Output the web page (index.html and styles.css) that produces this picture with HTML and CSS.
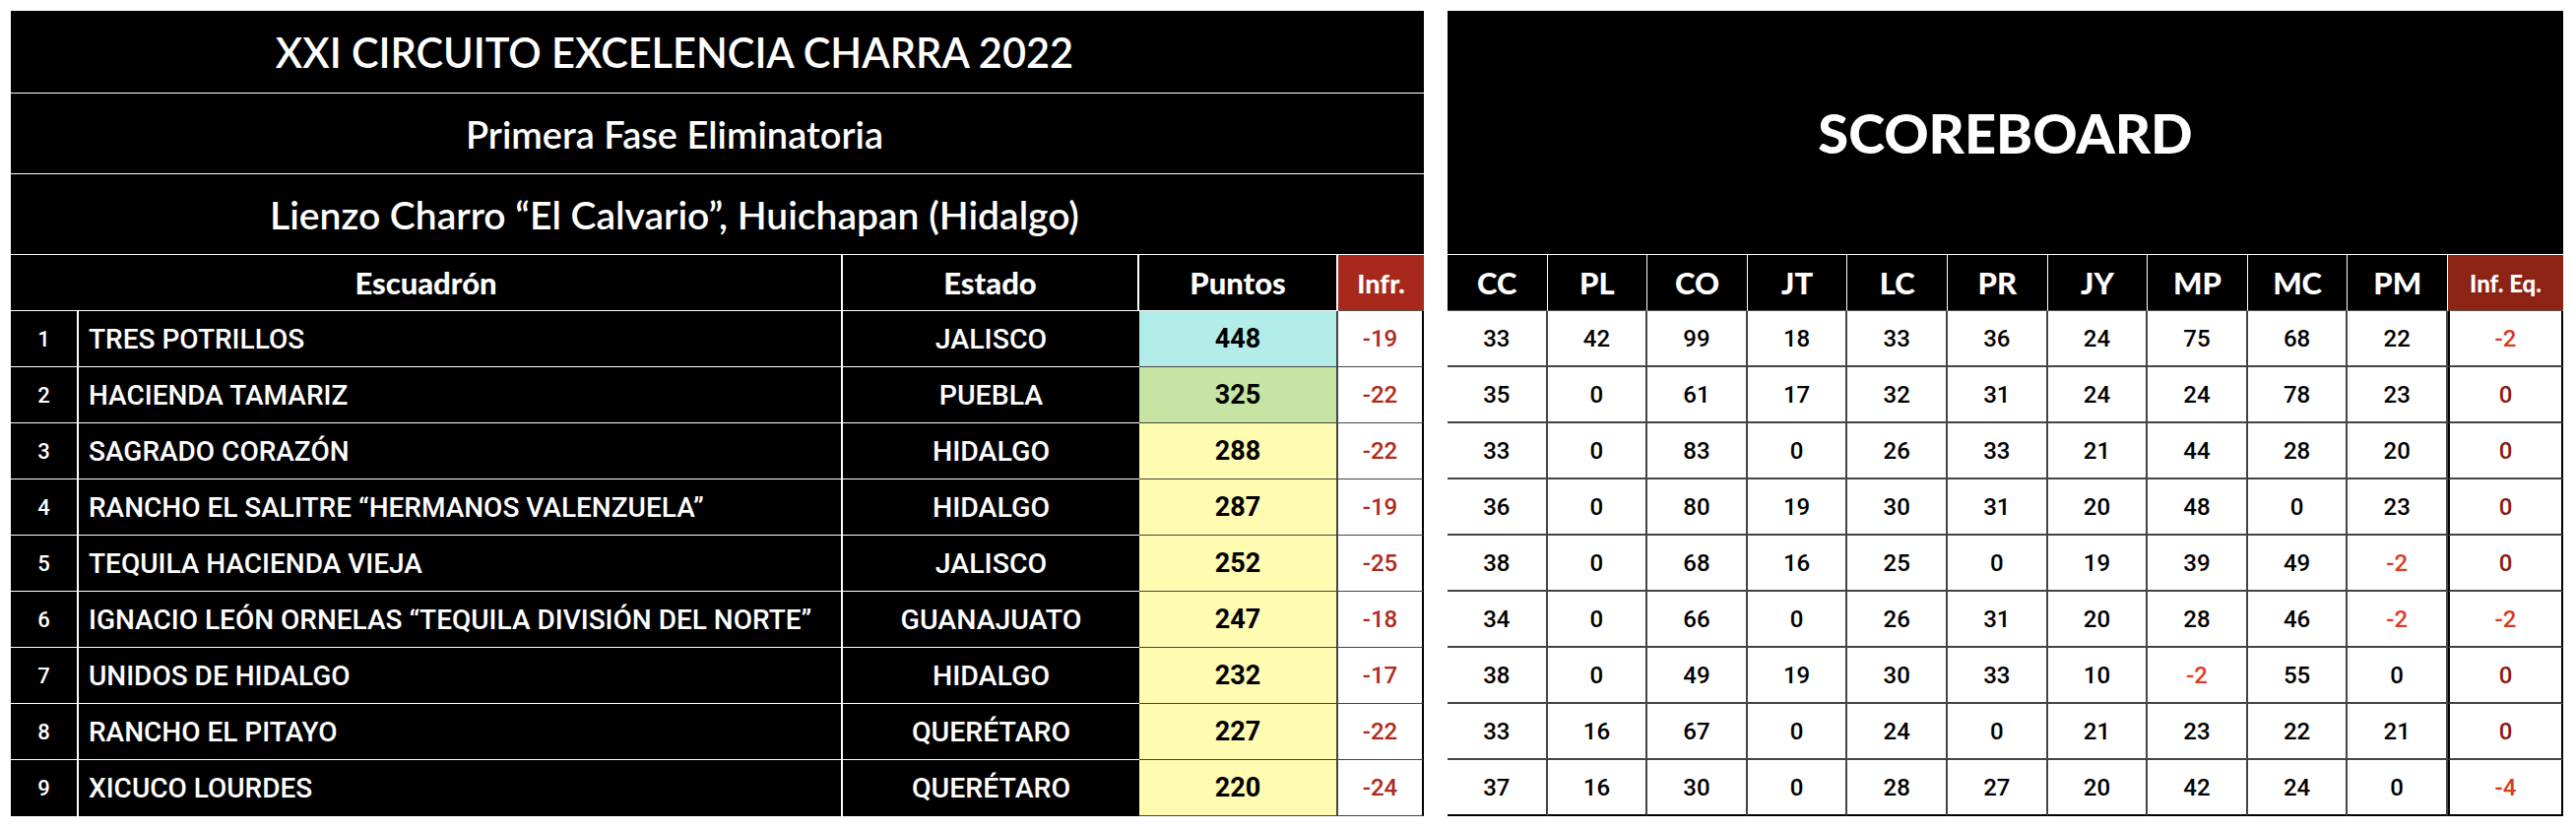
FILE: index.html
```html
<!DOCTYPE html>
<html lang="es">
<head>
<meta charset="utf-8">
<title>XXI Circuito Excelencia Charra 2022</title>
<link rel="stylesheet" href="styles.css">
</head>
<body>
<div class="page">
  <div class="left">
    <div class="t t1">XXI CIRCUITO EXCELENCIA CHARRA 2022</div>
    <div class="tx"></div>
    <div class="t t2">Primera Fase Eliminatoria</div>
    <div class="tx"></div>
    <div class="t t3">Lienzo Charro “El Calvario”, Huichapan (Hidalgo)</div>
    <div class="tx"></div>

    <div class="h hesc">Escuadrón</div>
    <div class="h">Estado</div>
    <div class="h">Puntos</div>
    <div class="h hinf">Infr.</div>

    <div class="rk">1</div><div class="nm">TRES POTRILLOS</div><div class="st">JALISCO</div><div class="pt p1">448</div><div class="if">-19</div>
    <div class="rk">2</div><div class="nm">HACIENDA TAMARIZ</div><div class="st">PUEBLA</div><div class="pt p2">325</div><div class="if">-22</div>
    <div class="rk">3</div><div class="nm">SAGRADO CORAZÓN</div><div class="st">HIDALGO</div><div class="pt">288</div><div class="if">-22</div>
    <div class="rk">4</div><div class="nm">RANCHO EL SALITRE “HERMANOS VALENZUELA”</div><div class="st">HIDALGO</div><div class="pt">287</div><div class="if">-19</div>
    <div class="rk">5</div><div class="nm">TEQUILA HACIENDA VIEJA</div><div class="st">JALISCO</div><div class="pt">252</div><div class="if">-25</div>
    <div class="rk">6</div><div class="nm">IGNACIO LEÓN ORNELAS “TEQUILA DIVISIÓN DEL NORTE”</div><div class="st">GUANAJUATO</div><div class="pt">247</div><div class="if">-18</div>
    <div class="rk">7</div><div class="nm">UNIDOS DE HIDALGO</div><div class="st">HIDALGO</div><div class="pt">232</div><div class="if">-17</div>
    <div class="rk">8</div><div class="nm">RANCHO EL PITAYO</div><div class="st">QUERÉTARO</div><div class="pt">227</div><div class="if">-22</div>
    <div class="rk last">9</div><div class="nm last">XICUCO LOURDES</div><div class="st last">QUERÉTARO</div><div class="pt">220</div><div class="if">-24</div>
  </div>

  <div class="right">
    <div class="sb">SCOREBOARD</div>
    <div class="rh">CC</div><div class="rh">PL</div><div class="rh">CO</div><div class="rh">JT</div><div class="rh">LC</div><div class="rh">PR</div><div class="rh">JY</div><div class="rh">MP</div><div class="rh">MC</div><div class="rh">PM</div><div class="rh rie">Inf. Eq.</div>

    <div class="rc">33</div><div class="rc">42</div><div class="rc">99</div><div class="rc">18</div><div class="rc">33</div><div class="rc">36</div><div class="rc">24</div><div class="rc">75</div><div class="rc">68</div><div class="rc">22</div><div class="rc ie neg">-2</div>
    <div class="rc">35</div><div class="rc">0</div><div class="rc">61</div><div class="rc">17</div><div class="rc">32</div><div class="rc">31</div><div class="rc">24</div><div class="rc">24</div><div class="rc">78</div><div class="rc">23</div><div class="rc ie">0</div>
    <div class="rc">33</div><div class="rc">0</div><div class="rc">83</div><div class="rc">0</div><div class="rc">26</div><div class="rc">33</div><div class="rc">21</div><div class="rc">44</div><div class="rc">28</div><div class="rc">20</div><div class="rc ie">0</div>
    <div class="rc">36</div><div class="rc">0</div><div class="rc">80</div><div class="rc">19</div><div class="rc">30</div><div class="rc">31</div><div class="rc">20</div><div class="rc">48</div><div class="rc">0</div><div class="rc">23</div><div class="rc ie">0</div>
    <div class="rc">38</div><div class="rc">0</div><div class="rc">68</div><div class="rc">16</div><div class="rc">25</div><div class="rc">0</div><div class="rc">19</div><div class="rc">39</div><div class="rc">49</div><div class="rc neg">-2</div><div class="rc ie">0</div>
    <div class="rc">34</div><div class="rc">0</div><div class="rc">66</div><div class="rc">0</div><div class="rc">26</div><div class="rc">31</div><div class="rc">20</div><div class="rc">28</div><div class="rc">46</div><div class="rc neg">-2</div><div class="rc ie neg">-2</div>
    <div class="rc">38</div><div class="rc">0</div><div class="rc">49</div><div class="rc">19</div><div class="rc">30</div><div class="rc">33</div><div class="rc">10</div><div class="rc neg">-2</div><div class="rc">55</div><div class="rc">0</div><div class="rc ie">0</div>
    <div class="rc">33</div><div class="rc">16</div><div class="rc">67</div><div class="rc">0</div><div class="rc">24</div><div class="rc">0</div><div class="rc">21</div><div class="rc">23</div><div class="rc">22</div><div class="rc">21</div><div class="rc ie">0</div>
    <div class="rc lr">37</div><div class="rc lr">16</div><div class="rc lr">30</div><div class="rc lr">0</div><div class="rc lr">28</div><div class="rc lr">27</div><div class="rc lr">20</div><div class="rc lr">42</div><div class="rc lr">24</div><div class="rc lr">0</div><div class="rc lr ie neg">-4</div>
  </div>
</div>
</body>
</html>
```
FILE: styles.css
```css
* { box-sizing: border-box; }
html, body { margin: 0; padding: 0; background: #fff; }
.page {
  display: flex;
  gap: 24px;
  padding: 11px 0 0 11px;
}
.left {
  display: grid;
  width: 1435px;
  grid-template-columns: 69px 776px 301px 202px 87px;
  grid-template-rows: 84px 82px 82px 57px repeat(9, 57px);
}
.left > div, .right > div {
  display: flex;
  align-items: center;
  justify-content: center;
  white-space: nowrap;
}
.t {
  grid-column: 1 / span 4;
  background: #000;
  color: #fff;
  font-family: Lato, "Liberation Sans", sans-serif;
  font-weight: 600;
  font-size: 41.5px;
  border-bottom: 1px solid #fff;
}
.t2 { font-size: 38px; }
.t3 { font-size: 39px; }
.tx { background: #000; border-bottom: 1px solid #fff; }
.h {
  background: #000;
  color: #fff;
  font-family: Lato, "Liberation Sans", sans-serif;
  font-weight: 900;
  font-size: 31px;
  border-right: 2px solid #fff;
  border-bottom: 1px solid #fff;
}
.hesc { grid-column: 1 / span 2; }
.hinf {
  background: #a8291c;
  font-size: 27px;
  border-right: 0;
  border-bottom: 1px solid #555;
}
.rk, .nm, .st {
  background: #000;
  color: #fff;
  font-family: Roboto, "Liberation Sans", sans-serif;
  font-weight: 500;
  border-bottom: 1px solid #fff;
}
.rk { font-size: 22px; border-right: 2px solid #fff; }
.nm {
  justify-content: flex-start !important;
  padding-left: 10px;
  font-size: 28px;
  border-right: 2px solid #fff;
}
.st { font-size: 28.5px; }
.last { border-bottom: 0; }
.pt {
  background: #fffbb1;
  color: #000;
  font-family: Roboto, "Liberation Sans", sans-serif;
  font-weight: 700;
  font-size: 27px;
  border-right: 2px solid #444;
  border-bottom: 1px solid #444;
}
.p1 { background: #b3ede9; }
.p2 { background: #c7e4a2; }
.if {
  background: #fff;
  color: #b02a1c;
  font-family: Roboto, "Liberation Sans", sans-serif;
  font-weight: 500;
  font-size: 24px;
  border-right: 2px solid #000;
  border-bottom: 1px solid #444;
}
.right {
  display: grid;
  width: 1133px;
  grid-template-columns: repeat(10, 1fr) 117px;
  grid-template-rows: 248px 57px repeat(9, 57px);
}
.sb {
  grid-column: 1 / -1;
  background: #000;
  color: #fff;
  font-family: Lato, "Liberation Sans", sans-serif;
  font-weight: 900;
  font-size: 56px;
  border-bottom: 1px solid #fff;
}
.rh {
  background: #000;
  color: #fff;
  font-family: Lato, "Liberation Sans", sans-serif;
  font-weight: 900;
  font-size: 31px;
  border-right: 1px solid #fff;
  border-bottom: 1px solid #555;
}
.rie {
  background: #8c2315;
  font-size: 24px;
  border-right: 0;
}
.rc {
  background: #fff;
  color: #000;
  font-family: Roboto, "Liberation Sans", sans-serif;
  font-weight: 500;
  font-size: 24px;
  border-right: 2px solid #444;
  border-bottom: 2px solid #444;
}
.rc:nth-child(11n + 1) { border-left: 2px solid #000; }
.rc.ie { border-right: 2px solid #000; color: #8a1b0e; }
.rc.neg { color: #de3c24; }
.rc.ie.neg { color: #d63a22; }
.rc.lr { border-bottom: 2px solid #000; }
```
